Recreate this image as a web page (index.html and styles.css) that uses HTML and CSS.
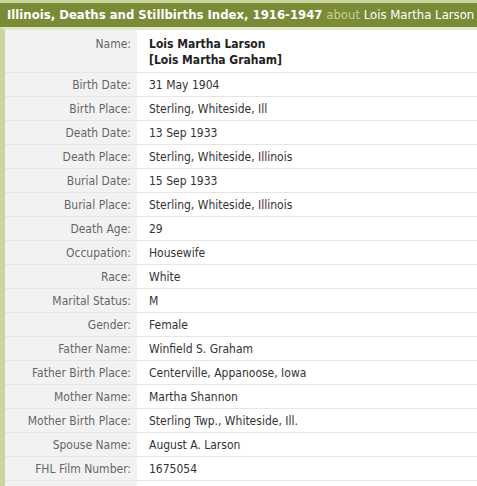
FILE: index.html
```html
<!DOCTYPE html>
<html>
<head>
<meta charset="utf-8">
<link rel="stylesheet" href="styles.css">
</head>
<body>
<div class="record">
  <div class="header">
    <span class="title">Illinois, Deaths and Stillbirths Index, 1916-1947</span>
    <span class="about">about</span>
    <span class="person">Lois Martha Larson</span>
  </div>
  <div class="body">
    <table class="facts">
      <tr><th>Name:</th><td class="name">Lois Martha Larson<br>[Lois Martha Graham]</td></tr>
      <tr><th>Birth Date:</th><td>31 May 1904</td></tr>
      <tr><th>Birth Place:</th><td>Sterling, Whiteside, Ill</td></tr>
      <tr><th>Death Date:</th><td>13 Sep 1933</td></tr>
      <tr><th>Death Place:</th><td>Sterling, Whiteside, Illinois</td></tr>
      <tr><th>Burial Date:</th><td>15 Sep 1933</td></tr>
      <tr><th>Burial Place:</th><td>Sterling, Whiteside, Illinois</td></tr>
      <tr><th>Death Age:</th><td>29</td></tr>
      <tr><th>Occupation:</th><td>Housewife</td></tr>
      <tr><th>Race:</th><td>White</td></tr>
      <tr><th>Marital Status:</th><td>M</td></tr>
      <tr><th>Gender:</th><td>Female</td></tr>
      <tr><th>Father Name:</th><td>Winfield S. Graham</td></tr>
      <tr><th>Father Birth Place:</th><td>Centerville, Appanoose, Iowa</td></tr>
      <tr><th>Mother Name:</th><td>Martha Shannon</td></tr>
      <tr><th>Mother Birth Place:</th><td>Sterling Twp., Whiteside, Ill.</td></tr>
      <tr><th>Spouse Name:</th><td>August A. Larson</td></tr>
      <tr><th>FHL Film Number:</th><td>1675054</td></tr>
      <tr><th>&nbsp;</th><td>&nbsp;</td></tr>
    </table>
  </div>
</div>
</body>
</html>
```
FILE: styles.css
```css
html, body {
  margin: 0;
  padding: 0;
  background: #ffffff;
}
body {
  font-family: "DejaVu Sans Condensed", "DejaVu Sans", sans-serif;
  font-size: 12px;
  color: #333333;
  overflow: hidden;
}
.record {
  width: 100%;
  border-top: 3px solid #cdd59f;
}
.header {
  background: #7a8b37;
  height: 24px;
  line-height: 24px;
  padding-left: 7px;
  font-size: 13px;
  color: #ffffff;
  white-space: nowrap;
  overflow: hidden;
}
.title {
  font-weight: bold;
}
.about {
  color: #c7d08c;
}
.body {
  border-top: 3px solid #e2e7c6;
  border-left: 5px solid #cdd59f;
}
.facts {
  border-collapse: collapse;
  width: 100%;
}
.facts th,
.facts td {
  line-height: 16px;
  padding: 4px 0 3px 0;
  border-bottom: 1px solid #e6e6e6;
  vertical-align: top;
  white-space: nowrap;
}
.facts th {
  width: 132px;
  background: #f2f2f2;
  color: #666666;
  font-weight: normal;
  text-align: right;
  padding-right: 6px;
  box-sizing: border-box;
}
.facts td {
  padding-left: 12px;
  color: #333333;
}
.facts tr:first-child th,
.facts tr:first-child td {
  padding-top: 6px;
  padding-bottom: 4px;
}
.facts td.name {
  font-weight: bold;
  color: #222222;
}
```
